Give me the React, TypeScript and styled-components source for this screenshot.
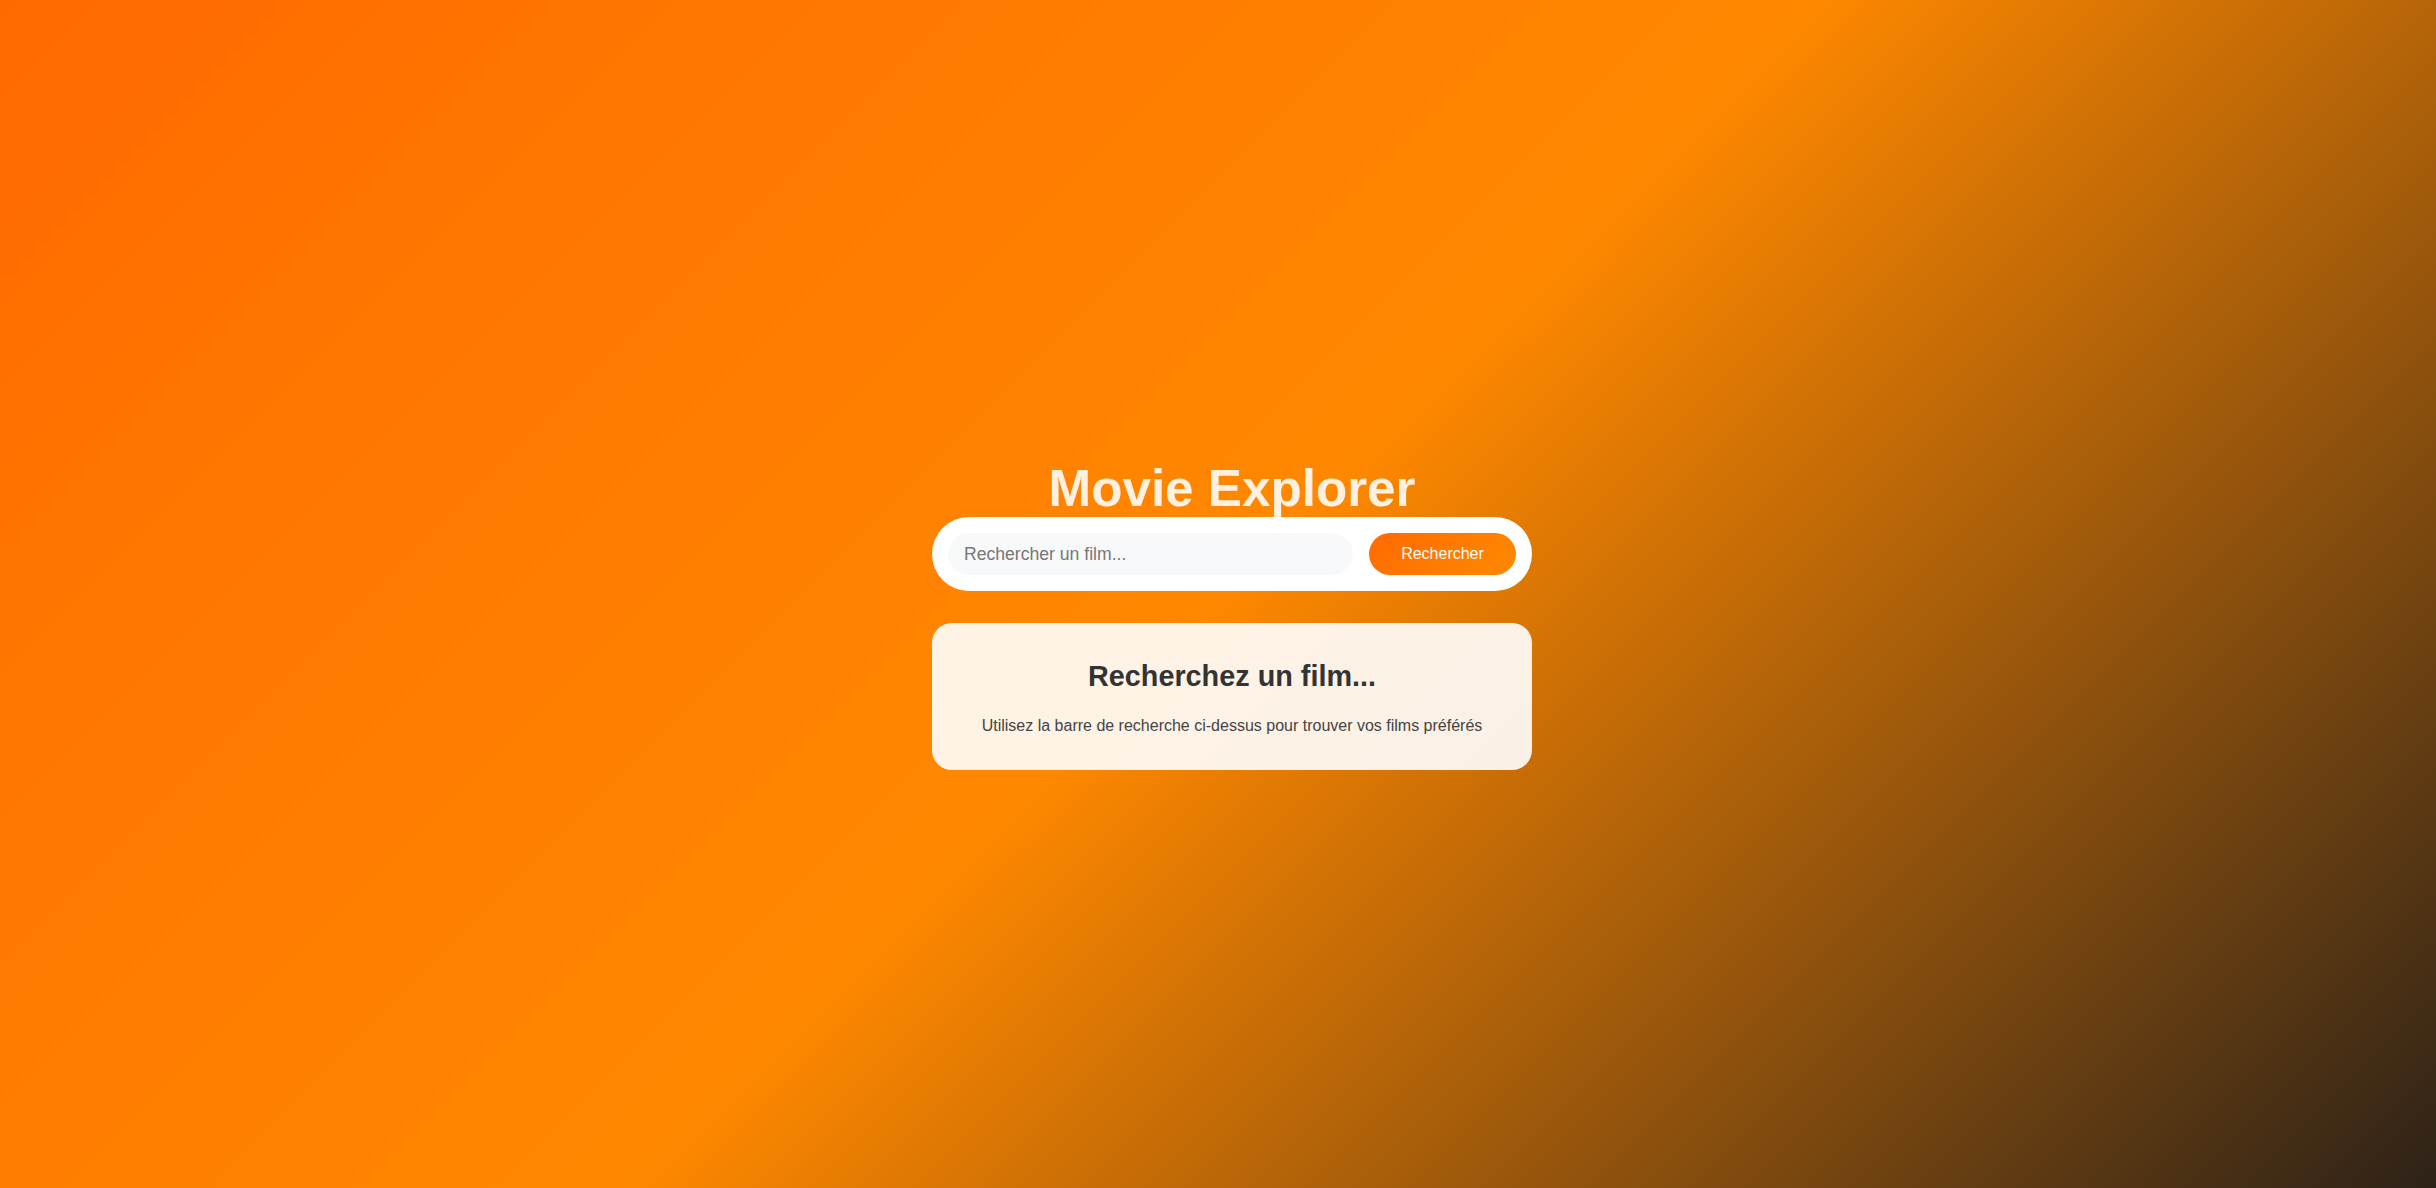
import React from "react";
import styled, { createGlobalStyle } from "styled-components";

const GlobalStyle = createGlobalStyle`
  * { box-sizing: border-box; }
  html, body { margin: 0; padding: 0; }
  body {
    font-family: "Liberation Sans", Arial, sans-serif;
    min-height: 100vh;
  }
`;

const Page = styled.div`
  min-height: 100vh;
  background: linear-gradient(135deg, #ff6a00 0%, #ff8800 50%, #2d2218 100%);
  display: flex;
  flex-direction: column;
  align-items: center;
  justify-content: center;
  padding: 43px 0 0 28px;
`;

const Container = styled.main`
  width: 600px;
  display: flex;
  flex-direction: column;
`;

const Title = styled.h1`
  margin: 0;
  text-align: center;
  font-size: 51.2px;
  font-weight: 700;
  line-height: 1.1;
  color: #fff0e0;
`;

const SearchBar = styled.form`
  display: flex;
  gap: 16px;
  padding: 16px;
  background: #ffffff;
  border-radius: 50px;
`;

const SearchInput = styled.input`
  flex: 1;
  border: none;
  outline: none;
  background: #f8f9fa;
  border-radius: 25px;
  padding: 0 16px;
  font-family: "Liberation Sans", Arial, sans-serif;
  font-size: 17.6px;
  height: 42px;
  color: #333;
  &::placeholder { color: #777; }
`;

const SearchButton = styled.button`
  border: none;
  border-radius: 25px;
  padding: 0 32px;
  width: 147px;
  height: 42px;
  background: linear-gradient(135deg, #ff6a00, #ff8a00);
  color: #ffffff;
  font-family: "Liberation Sans", Arial, sans-serif;
  font-size: 16px;
  cursor: pointer;
`;

const EmptyCard = styled.section`
  margin-top: 32px;
  background: rgba(255, 255, 255, 0.9);
  border-radius: 20px;
  padding: 37px 32px 35px;
  text-align: center;
`;

const CardTitle = styled.h2`
  margin: 0 0 23px;
  font-size: 28.8px;
  font-weight: 700;
  line-height: 1.15;
  color: #333;
`;

const CardText = styled.p`
  margin: 0;
  font-size: 16px;
  line-height: 1.15;
  color: #444;
`;

export default function App() {
  return (
    <>
      <GlobalStyle />
      <Page>
        <Container>
          <Title>Movie Explorer</Title>
          <SearchBar onSubmit={(e) => e.preventDefault()}>
            <SearchInput type="text" placeholder="Rechercher un film..." />
            <SearchButton type="submit">Rechercher</SearchButton>
          </SearchBar>
          <EmptyCard>
            <CardTitle>Recherchez un film...</CardTitle>
            <CardText>
              Utilisez la barre de recherche ci-dessus pour trouver vos films préférés
            </CardText>
          </EmptyCard>
        </Container>
      </Page>
    </>
  );
}
